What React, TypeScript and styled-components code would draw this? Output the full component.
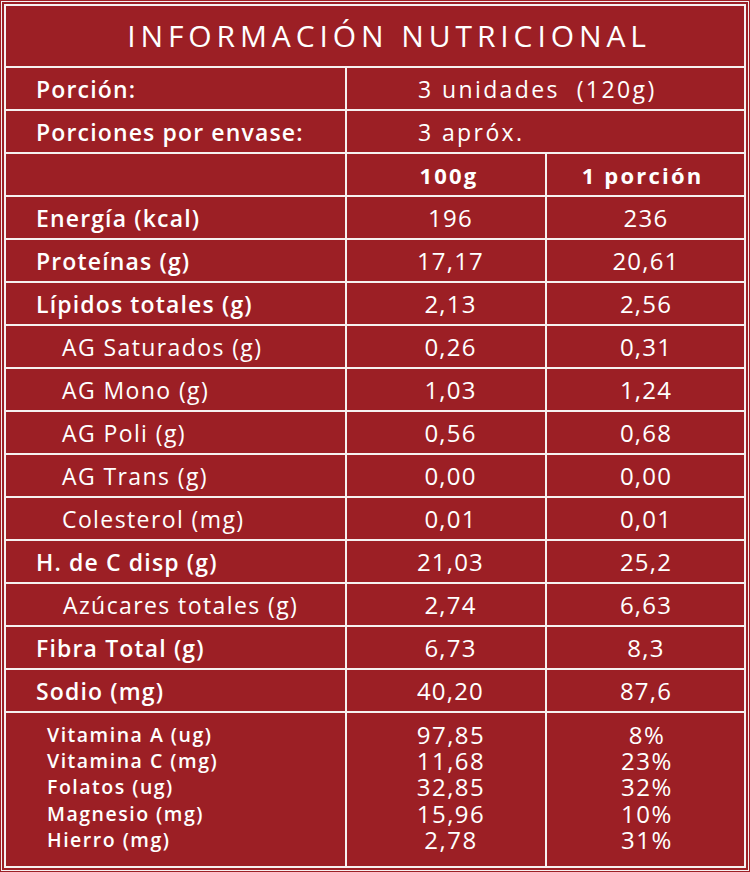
import React from "react";
import styled, { createGlobalStyle } from "styled-components";

const RED = "#9c1f25";
const LINE = "#f6f0f0";
const FONT = `"Open Sans", "Noto Sans", Arial, sans-serif`;

const GlobalStyle = createGlobalStyle`
  html, body { margin: 0; padding: 0; background: ${RED}; }
  * { box-sizing: border-box; }
`;

const Page = styled.div`
  width: 750px;
  height: 872px;
  padding: 1px;
  background: ${RED};
  font-family: ${FONT};
  color: #ffffff;
`;

const Frame = styled.div`
  height: 100%;
  border: 1px solid ${LINE};
  padding: 2px;
`;

const Table = styled.div`
  height: 100%;
  display: grid;
  grid-template-columns: 339px 198px 197px;
  grid-template-rows: 60px repeat(15, 41px) 1fr;
  gap: 2px;
  padding: 2px;
  background: ${LINE};
`;

const Cell = styled.div`
  background: ${RED};
  display: flex;
  align-items: center;
  min-width: 0;
  white-space: nowrap;
`;

const TitleCell = styled(Cell)`
  grid-column: 1 / -1;
  justify-content: center;
  padding-left: 28px;
  padding-bottom: 2px;
  font-size: 30px;
  font-weight: 400;
  letter-spacing: 4.9px;
`;

type Indent = "main" | "sub" | "sugar";

const LabelCell = styled(Cell)<{ $indent?: Indent }>`
  padding-left: ${(p) => (p.$indent === "sub" ? 56 : p.$indent === "sugar" ? 57 : 30)}px;
  font-size: 23px;
  font-weight: ${(p) => (p.$indent === "main" || !p.$indent ? 600 : 400)};
  letter-spacing: ${(p) => (p.$indent === "main" || !p.$indent ? 1.15 : 1.4)}px;
`;

const InfoValue = styled(Cell)`
  grid-column: 2 / 4;
  padding-left: 71px;
  font-size: 23px;
  font-weight: 400;
  letter-spacing: 2.4px;
`;

const ValueCell = styled(Cell)<{ $bold?: boolean; $shift?: number }>`
  justify-content: center;
  font-size: ${(p) => (p.$bold ? 22 : 24)}px;
  font-weight: ${(p) => (p.$bold ? 700 : 400)};
  letter-spacing: ${(p) => (p.$bold ? 2.2 : 1.2)}px;
  padding-left: ${(p) => Math.max(0, p.$shift ?? 0) * 2}px;
  padding-right: ${(p) => Math.max(0, -(p.$shift ?? 0)) * 2}px;
`;

const StackCell = styled(Cell)<{ $align: "left" | "center"; $shift?: number }>`
  flex-direction: column;
  justify-content: center;
  align-items: ${(p) => (p.$align === "left" ? "flex-start" : "center")};
  padding-left: ${(p) => (p.$align === "left" ? 41 : Math.max(0, p.$shift ?? 0) * 2)}px;
  padding-right: ${(p) => (p.$align === "left" ? 0 : Math.max(0, -(p.$shift ?? 0)) * 2)}px;
  padding-bottom: 4px;
`;

const StackLine = styled.span<{ $kind: "label" | "value" }>`
  display: block;
  line-height: 26.3px;
  height: 26.3px;
  font-size: ${(p) => (p.$kind === "label" ? 19.5 : 24)}px;
  font-weight: ${(p) => (p.$kind === "label" ? 600 : 400)};
  letter-spacing: ${(p) => (p.$kind === "label" ? 1.5 : 1.5)}px;
`;

type Row = { label: string; a: string; b: string; indent: Indent };

const rows: Row[] = [
  { label: "Energía (kcal)", a: "196", b: "236", indent: "main" },
  { label: "Proteínas (g)", a: "17,17", b: "20,61", indent: "main" },
  { label: "Lípidos totales (g)", a: "2,13", b: "2,56", indent: "main" },
  { label: "AG Saturados (g)", a: "0,26", b: "0,31", indent: "sub" },
  { label: "AG Mono (g)", a: "1,03", b: "1,24", indent: "sub" },
  { label: "AG Poli (g)", a: "0,56", b: "0,68", indent: "sub" },
  { label: "AG Trans (g)", a: "0,00", b: "0,00", indent: "sub" },
  { label: "Colesterol (mg)", a: "0,01", b: "0,01", indent: "sub" },
  { label: "H. de C disp (g)", a: "21,03", b: "25,2", indent: "main" },
  { label: "Azúcares totales (g)", a: "2,74", b: "6,63", indent: "sugar" },
  { label: "Fibra Total (g)", a: "6,73", b: "8,3", indent: "main" },
  { label: "Sodio (mg)", a: "40,20", b: "87,6", indent: "main" },
];

const micros = [
  { label: "Vitamina A (ug)", a: "97,85", b: "8%" },
  { label: "Vitamina C (mg)", a: "11,68", b: "23%" },
  { label: "Folatos (ug)", a: "32,85", b: "32%" },
  { label: "Magnesio (mg)", a: "15,96", b: "10%" },
  { label: "Hierro (mg)", a: "2,78", b: "31%" },
];

export default function App() {
  return (
    <>
      <GlobalStyle />
      <Page>
        <Frame>
          <Table>
            <TitleCell>INFORMACIÓN NUTRICIONAL</TitleCell>

            <LabelCell $indent="main">Porción:</LabelCell>
            <InfoValue>3 unidades&nbsp; (120g)</InfoValue>

            <LabelCell $indent="main">Porciones por envase:</LabelCell>
            <InfoValue>3 apróx.</InfoValue>

            <Cell />
            <ValueCell $bold $shift={3}>100g</ValueCell>
            <ValueCell $bold $shift={-3}>1 porción</ValueCell>

            {rows.map((r) => (
              <React.Fragment key={r.label}>
                <LabelCell $indent={r.indent}>{r.label}</LabelCell>
                <ValueCell $shift={4.5}>{r.a}</ValueCell>
                <ValueCell $shift={0.5}>{r.b}</ValueCell>
              </React.Fragment>
            ))}

            <StackCell $align="left">
              {micros.map((m) => (
                <StackLine key={m.label} $kind="label">
                  {m.label}
                </StackLine>
              ))}
            </StackCell>
            <StackCell $align="center" $shift={5}>
              {micros.map((m) => (
                <StackLine key={m.label} $kind="value">
                  {m.a}
                </StackLine>
              ))}
            </StackCell>
            <StackCell $align="center" $shift={1.5}>
              {micros.map((m) => (
                <StackLine key={m.label} $kind="value">
                  {m.b}
                </StackLine>
              ))}
            </StackCell>
          </Table>
        </Frame>
      </Page>
    </>
  );
}
